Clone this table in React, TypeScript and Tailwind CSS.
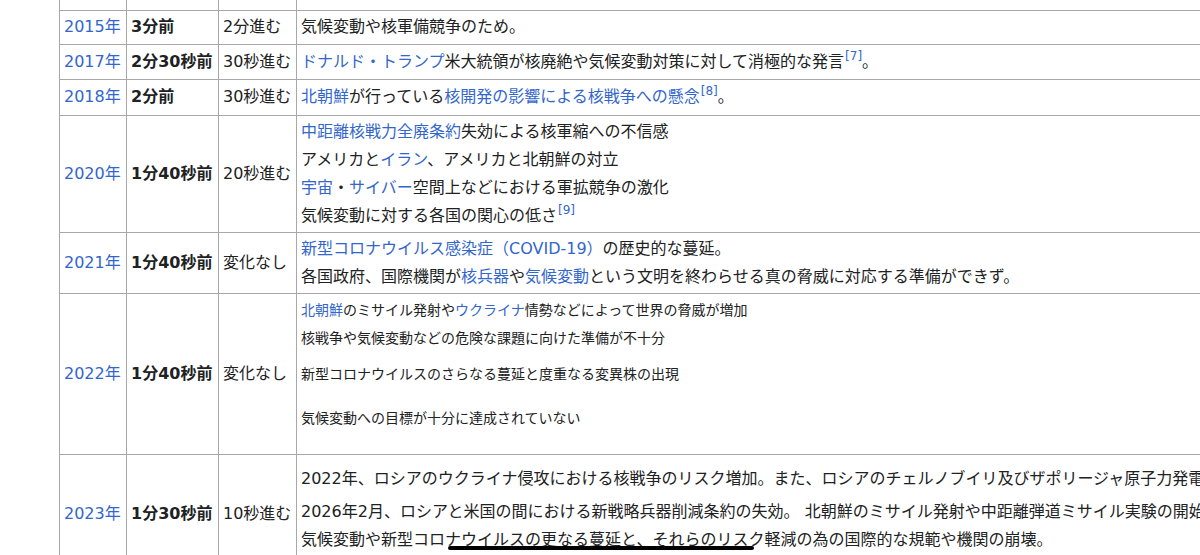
import React from "react";

const L = ({ children }: { children: React.ReactNode }) => (
  <span className="text-[#3366cc]">{children}</span>
);

const Sup = ({ n }: { n: number }) => (
  <span className="relative -top-[7px] text-[12px] leading-none text-[#3366cc] ml-[1px]">[{n}]</span>
);

const td = "border border-[#a8a8a8] px-[4px] py-[2px] align-middle";

function Row({
  year,
  before,
  change,
  children,
  h,
}: {
  year: string;
  before: string;
  change: string;
  children: React.ReactNode;
  h: string;
}) {
  return (
    <tr className={h}>
      <td className={td}>
        <L>{year}</L>
      </td>
      <td className={td + " font-bold whitespace-nowrap"}>{before}</td>
      <td className={td + " whitespace-nowrap"}>{change}</td>
      <td className={td + " whitespace-nowrap"}>{children}</td>
    </tr>
  );
}

export default function App() {
  return (
    <div
      className="w-[1200px] h-[555px] overflow-hidden bg-white text-[#202122] text-[16px] leading-[28px]"
      style={{ fontFamily: '"DejaVu Sans", "Noto Sans CJK JP", sans-serif' }}
    >
      <div className="pl-[59px]">
        <table className="border-collapse table-fixed w-[1400px]">
          <colgroup>
            <col className="w-[67px]" />
            <col className="w-[92px]" />
            <col className="w-[78px]" />
            <col />
          </colgroup>
          <tbody>
            <tr className="h-[10px]">
              <td className="border border-t-0 border-[#a8a8a8] p-0 h-[10px]"></td>
              <td className="border border-t-0 border-[#a8a8a8] p-0"></td>
              <td className="border border-t-0 border-[#a8a8a8] p-0"></td>
              <td className="border border-t-0 border-[#a8a8a8] p-0"></td>
            </tr>
            <Row year="2015年" before="3分前" change="2分進む" h="h-[34px]">
              気候変動や核軍備競争のため。
            </Row>
            <Row year="2017年" before="2分30秒前" change="30秒進む" h="h-[35px]">
              <L>ドナルド・トランプ</L>米大統領が核廃絶や気候変動対策に対して消極的な発言
              <Sup n={7} />。
            </Row>
            <Row year="2018年" before="2分前" change="30秒進む" h="h-[36px]">
              <L>北朝鮮</L>が行っている<L>核開発の影響による核戦争への懸念</L>
              <Sup n={8} />。
            </Row>
            <Row year="2020年" before="1分40秒前" change="20秒進む" h="h-[116px]">
              <div>
                <L>中距離核戦力全廃条約</L>失効による核軍縮への不信感
              </div>
              <div>
                アメリカと<L>イラン</L>、アメリカと北朝鮮の対立
              </div>
              <div>
                <L>宇宙</L>・<L>サイバー</L>空間上などにおける軍拡競争の激化
              </div>
              <div>
                気候変動に対する各国の関心の低さ
                <Sup n={9} />
              </div>
            </Row>
            <Row year="2021年" before="1分40秒前" change="変化なし" h="h-[61px]">
              <div>
                <L>新型コロナウイルス感染症（COVID-19）</L>の歴史的な蔓延。
              </div>
              <div>
                各国政府、国際機関が<L>核兵器</L>や<L>気候変動</L>という文明を終わらせる真の脅威に対応する準備ができず。
              </div>
            </Row>
            <Row year="2022年" before="1分40秒前" change="変化なし" h="h-[161px]">
              <div className="text-[14px] pb-[19px]">
                <div>
                  <L>北朝鮮</L>のミサイル発射や<L>ウクライナ</L>情勢などによって世界の脅威が増加
                </div>
                <div>核戦争や気候変動などの危険な課題に向けた準備が不十分</div>
                <div className="mt-[8px]">新型コロナウイルスのさらなる蔓延と度重なる変異株の出現</div>
                <div className="mt-[16px]">気候変動への目標が十分に達成されていない</div>
              </div>
            </Row>
            <Row year="2023年" before="1分30秒前" change="10秒進む" h="h-[120px]">
              <div className="pb-[10px]">
                <div>
                  2022年、ロシアのウクライナ侵攻における核戦争のリスク増加。また、ロシアのチェルノブイリ及びザポリージャ原子力発電所の占拠。
                </div>
                <div className="mt-[5px]">
                  2026年2月、ロシアと米国の間における新戦略兵器削減条約の失効。 北朝鮮のミサイル発射や中距離弾道ミサイル実験の開始。
                </div>
                <div>
                  気候変動や新型コロ
                  <span className="relative">
                    ナウイルスの更なる蔓延と、それらのリスク
                    <span className="absolute left-[3px] right-[10px] bottom-[-1px] h-[4px] rounded-full bg-black"></span>
                  </span>
                  軽減の為の国際的な規範や機関の崩壊。
                </div>
              </div>
            </Row>
          </tbody>
        </table>
      </div>
    </div>
  );
}
